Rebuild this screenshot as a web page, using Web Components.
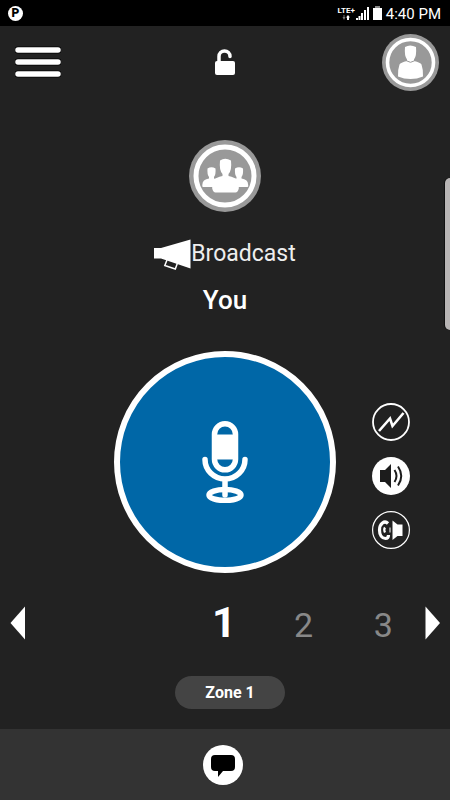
<!DOCTYPE html>
<html lang="en">
<head>
<meta charset="utf-8">
<meta name="viewport" content="width=device-width, initial-scale=1">
<title>Push to talk</title>
<style>
  html, body { margin: 0; background: #222; }
  body { font-family: Roboto, "Liberation Sans", sans-serif; color: #fff; }
</style>
</head>
<body>
<ptt-app></ptt-app>
<script>
const base = `<style>
  * { box-sizing: border-box; }
  svg { display: block; }
  button { display: block; margin: 0; padding: 0; border: 0; background: none; color: inherit; font: inherit; cursor: pointer; }
</style>`;
function define(name, html) {
  const template = document.createElement('template');
  template.innerHTML = base + html;
  customElements.define(name, class extends HTMLElement {
    constructor() {
      super();
      this.attachShadow({ mode: 'open' }).append(template.content.cloneNode(true));
    }
  });
}

define('status-bar', `<style>
  :host { display: flex; align-items: center; justify-content: space-between; height: 26px; padding: 0 9px 0 8px; background: #000; }
  .app { width: 15px; height: 15px; border-radius: 50%; background: #fff; color: #000; font-size: 12px; font-weight: 900; line-height: 15px; text-align: center; }
  .right { display: flex; align-items: center; gap: 4px; }
  .net { font-size: 8px; font-weight: 700; line-height: 8px; display: grid; justify-items: center; }
  .radio { display: flex; align-items: center; gap: 1px; }
  .time { font-size: 15px; line-height: 26px; padding-top: 1px; }
</style>
<span class="app">P</span>
<div class="right">
  <div class="radio">
    <div class="net">LTE+
      <svg width="9" height="5" viewBox="0 0 9 5"><path d="M1.500 0h1v2h1l-1.500 3L.5 2h1z" fill="#777"/><path d="M6 0l2 2.500H7V5H5V2.500H4z" fill="#fff"/></svg>
    </div>
    <svg width="13" height="13" viewBox="0 0 13 13" fill="#fff"><path d="M0 11h2v2H0zM2.500 9h2v4h-2zM5 6h2v7H5zM8 3h2v10H8zM11 0h2v13h-2z"/></svg>
  </div>
  <svg width="9" height="14" viewBox="0 0 9 14"><path d="M2 0h5v2h2v12H0V2h2z" fill="#fff"/><path d="M2 0h5v2H2z" fill="#888"/></svg>
  <span class="time">4:40 PM</span>
</div>`);

define('app-header', `<style>
  :host { display: grid; grid-template-columns: 1fr auto 1fr; align-items: center; height: 72px; padding: 0 11px; }
  .end { justify-self: end; }
  .start { justify-self: start; padding-left: 4px; }
</style>
<button class="start" aria-label="Menu"><svg width="46" height="32" viewBox="0 0 46 32"><path d="M3 4h40M3 16h40M3 28h40" stroke="#000" stroke-width="7" stroke-linecap="round"/><path d="M3 4h40M3 16h40M3 28h40" stroke="#fff" stroke-width="5.500" stroke-linecap="round"/></svg></button>
<button aria-label="Unlocked"><svg width="20" height="26" viewBox="0 0 20 26"><path d="M4 14V7.500a5.500 5.500 0 0 1 11 0" fill="none" stroke="#fff" stroke-width="3.500" stroke-linecap="round"/><rect x="0" y="12" width="20" height="14" rx="2" fill="#fff"/></svg></button>
<button class="end" aria-label="Profile"><svg width="57" height="57" viewBox="0 0 57 57"><circle cx="28.500" cy="28.500" r="28.500" fill="#999"/><circle cx="28.500" cy="28.500" r="23" fill="#999" stroke="#fff" stroke-width="3.600"/>
<path d="M23 13q5-3 11 0 .8 9-2 12.500v1.500q6.500 1.500 7.500 3.500 1.800 5 1.500 12-6 2.500-12.500 2.500T16 42.500q-.3-7 1.500-12Q18.500 28.500 25 27v-1.500Q22.200 22 23 13z" fill="#fff"/><path d="M24.500 26.800q4 3 8 0" fill="none" stroke="#999" stroke-width="1"/></svg></button>`);

define('call-info', `<style>
  :host { display: grid; justify-items: center; padding-top: 42px; }
  .line { display: flex; align-items: center; height: 32px; margin-top: 26px; font-size: 23px; line-height: 32px; color: #eee; }
  .who { margin-top: 14px; font-size: 26px; line-height: 32px; font-weight: 500; }
</style>
<svg width="72" height="72" viewBox="0 0 72 72" role="img" aria-label="Group">
  <circle cx="36" cy="36" r="36" fill="#999"/><circle cx="36" cy="36" r="29" fill="none" stroke="#fff" stroke-width="5"/>
  <g fill="#fff">
    <path d="M18.500 28.500q4-2.500 8 0 .5 6-1.500 8.500v1.500q3 .5 5 2.500v6H14q-1 0-.7-2 .2-3.500 1.700-4.500 2-1.500 5-2V37q-2-2.500-1.500-8.500z"/>
    <path d="M46 28.500q4-2.500 8 0 .5 6-1.500 8.500v1.500q3 .5 5 2 1.500 1 1.700 4.500.3 2-.7 2h-16v-6q2-2 5-2.500V37q-2-2.500-1.500-8.500z"/>
    <path d="M31 20.500q5-3.500 11 0 1 10-2.500 13.500v2q6.500 1.500 8.500 3.500 2 3 1.800 9-1 4-3.300 4H26.500q-2.300 0-3.300-4-.2-6 1.800-9 2-2 8.500-3.500v-2q-3.500-3.500-2.500-13.500z"/>
  </g>
</svg>
<div class="line"><svg width="37" height="32" viewBox="0 0 37 32"><path d="M0 10h7L36.500 1.500v29L7 20.500H0z" fill="#fff"/><path d="M13 22l-2.200 5.500 10.500 3.500 2.200-6" fill="none" stroke="#fff" stroke-width="1.500"/></svg><slot name="kind"></slot></div>
<div class="who"><slot name="who"></slot></div>`);

define('talk-panel', `<style>
  :host { display: grid; grid-template-columns: 1fr auto 1fr; align-items: center; padding-top: 35px; }
  .talk { grid-column: 2; display: grid; place-items: center; width: 222px; height: 222px; border: 6px solid #fff; border-radius: 50%; background: #0067a7; }
  .tools { justify-self: end; display: grid; gap: 16px; padding: 28px 40px 0 0; }
</style>
<button class="talk" aria-label="Push to talk"><svg width="46" height="82" viewBox="0 0 46 82" fill="none" stroke="#fff" stroke-width="5.500">
  <rect x="12.500" y="2.800" width="21" height="46" rx="10.500"/><path d="M12 13.500h22v25H12z" fill="#fff" stroke="none"/>
  <path d="M3 38.500a20 19.500 0 0 0 40 0M23 58v16" stroke-linecap="round"/><ellipse cx="23" cy="74" rx="16" ry="5.500"/></svg></button>
<div class="tools">
  <button aria-label="Alert"><svg width="38" height="38" viewBox="0 0 38 38" fill="none" stroke="#fff"><circle cx="19" cy="19" r="18" stroke-width="1.800"/><path d="M7 28l11-12.500 2.500 7.500L31.500 10" stroke-width="2.600"/></svg></button>
  <button aria-label="Speaker"><svg width="38" height="38" viewBox="0 0 38 38"><circle cx="19" cy="19" r="19" fill="#fff"/><path d="M8 13h5l6-6v24l-6-6H8z" fill="#1c1c1c"/><path d="M22.500 13q4 6 0 12M26 9.500q6.500 9.500 0 19" fill="none" stroke="#1c1c1c" stroke-width="2"/></svg></button>
  <button aria-label="Earpiece"><svg width="38" height="38" viewBox="0 0 38 38"><circle cx="19" cy="19" r="18.400" fill="none" stroke="#fff" stroke-width="1.200"/><path d="M16 12.500C12.500 9 7.500 12.500 7.500 19c0 5 2.500 8.500 6 8.500 2.500 0 3-1.500 3-3.500" fill="none" stroke="#fff" stroke-width="3.200"/><path d="M13 16.500q-1.500 2 0 5" fill="none" stroke="#fff" stroke-width="2.200"/><path d="M18 16.500v5" stroke="#fff" stroke-width="1"/><path d="M20.500 9.500l5 4h5v11.500h-5l-5 4z" fill="#fff"/></svg></button>
</div>`);

define('channel-picker', `<style>
  :host { display: flex; align-items: center; height: 50px; margin-top: 25px; padding: 0 10px; }
  .list { flex: 1; display: grid; grid-template-columns: repeat(5, 1fr); align-items: baseline; padding: 2px 2px 0 0; line-height: 48px; }
  .list button { font-size: 34px; color: #888; }
  .list .on { grid-column: 3; font-size: 42px; font-weight: 700; color: #fff; }
</style>
<button aria-label="Previous"><svg width="15" height="34" viewBox="0 0 15 34"><path d="M15 .5v33L.5 17z" fill="#fff"/></svg></button>
<div class="list"><button class="on">1</button><button>2</button><button>3</button></div>
<button aria-label="Next"><svg width="15" height="34" viewBox="0 0 15 34"><path d="M.5.500v33L15 17z" fill="#fff"/></svg></button>`);

define('zone-pill', `<style>
  :host { display: flex; justify-content: center; padding: 28px 0 20px; }
  button { min-width: 110px; height: 33px; margin-left: 10px; padding: 0 24px; border-radius: 17px; background: #444; font-size: 16px; font-weight: 700; line-height: 33px; }
</style><button><slot></slot></button>`);

define('bottom-bar', `<style>
  :host { display: flex; flex: 1; justify-content: center; align-items: center; min-height: 71px; background: #333; }
  button { margin-right: 4px; }
</style>
<button aria-label="Messages"><svg width="40" height="40" viewBox="0 0 40 40"><circle cx="20" cy="20" r="20" fill="#fff"/><path d="M12 10h16q4 0 4 4v8q0 4-4 4h-8l-5 6v-6h-3q-4 0-4-4v-8q0-4 4-4z" fill="#000"/></svg></button>`);

define('edge-handle', `<style>
  :host { position: absolute; right: 0; top: 178px; width: 5px; height: 152px; border-radius: 5px 0 0 5px; background: #b8b5b5; box-shadow: -1px 0 0 #111; }
</style>`);

define('ptt-app', `<style>
  :host { position: relative; display: flex; flex-direction: column; min-height: 100vh; background: #222; }
</style>
<status-bar></status-bar>
<app-header></app-header>
<call-info><span slot="kind">Broadcast</span><span slot="who">You</span></call-info>
<talk-panel></talk-panel>
<channel-picker></channel-picker>
<zone-pill>Zone 1</zone-pill>
<bottom-bar></bottom-bar>
<edge-handle></edge-handle>`);
</script>
</body>
</html>
